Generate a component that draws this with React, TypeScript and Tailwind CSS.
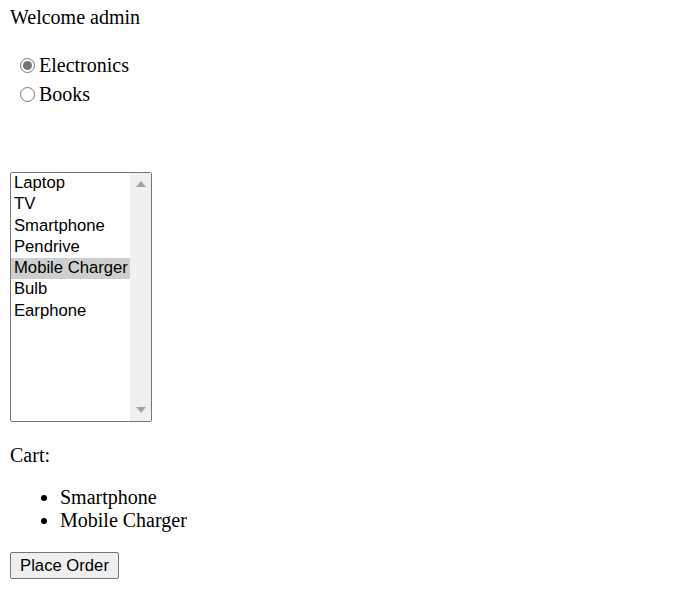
import React from "react";

const items = ["Laptop", "TV", "Smartphone", "Pendrive", "Mobile Charger", "Bulb", "Earphone"];

function Radio({ checked }: { checked?: boolean }) {
  return (
    <span className="flex h-[15px] w-[15px] items-center justify-center rounded-full border border-[#767676] bg-white">
      {checked && <span className="h-[9px] w-[9px] rounded-full bg-[#767676]" />}
    </span>
  );
}

export default function App() {
  return (
    <div className="min-h-[598px] bg-white pl-[10px] pt-[6px] font-['Liberation_Serif',serif] text-[20px] leading-[23px] text-black">
      <div>Welcome admin</div>
      <div className="mt-[25px] pl-[10px]">
        <div className="flex h-[23px] items-center gap-[4px]">
          <Radio checked />
          <span>Electronics</span>
        </div>
        <div className="mt-[6px] flex h-[23px] items-center gap-[4px]">
          <Radio />
          <span>Books</span>
        </div>
      </div>
      <div className="mt-[66px] flex h-[250px] w-[142px] rounded-[2px] border border-[#767676] font-['Liberation_Sans',sans-serif] text-[16.67px] leading-[20px]">
        <div className="flex-1">
          {items.map((it) => (
            <div
              key={it}
              className={
                "h-[21.25px] whitespace-nowrap pl-[3px] " + (it === "Mobile Charger" ? "bg-[#cecece]" : "")
              }
            >
              {it}
            </div>
          ))}
        </div>
        <div className="flex w-[21px] flex-col items-center justify-between bg-[#f0f0f0] py-[8px]">
          <svg width="10" height="6" viewBox="0 0 10 6">
            <polygon points="0,6 10,6 5,0" fill="#a3a3a3" />
          </svg>
          <svg width="10" height="6" viewBox="0 0 10 6">
            <polygon points="0,0 10,0 5,6" fill="#a3a3a3" />
          </svg>
        </div>
      </div>
      <div className="mt-[22px]">Cart:</div>
      <ul className="mt-[19px] list-disc pl-[50px]">
        <li>Smartphone</li>
        <li>Mobile Charger</li>
      </ul>
      <button className="mt-[20px] flex h-[27px] w-[109px] items-center justify-center rounded-[2px] border border-[#767676] bg-[#efefef] font-['Liberation_Sans',sans-serif] text-[16.67px] leading-[18px] text-black">
        Place Order
      </button>
    </div>
  );
}
